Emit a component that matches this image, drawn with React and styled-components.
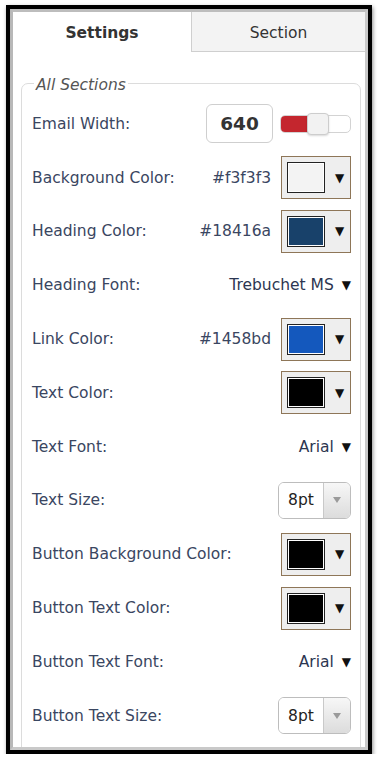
import React from "react";
import styled, { createGlobalStyle } from "styled-components";

const Global = createGlobalStyle`
  html, body { margin: 0; padding: 0; background: #fff; }
  body { font-family: "DejaVu Sans", sans-serif; }
  * { box-sizing: border-box; }
`;

const Frame = styled.div`
  margin: 5px 0 0 6px;
  width: 366px;
  height: 749px;
  border: 4px solid #000;
  box-shadow: 1px 2px 4px rgba(0, 0, 0, 0.45);
  overflow: hidden;
  background: #fff;
`;

const Bevel = styled.div`
  height: 100%;
  border: 3px solid #c9c9c9;
  border-left-color: #b8b8b8;
  border-top-color: #bdbdbd;
  overflow: hidden;
  display: flex;
  flex-direction: column;
`;

const Tabs = styled.div`
  display: flex;
  height: 40px;
  flex: none;
`;

const Tab = styled.div`
  flex: ${(p) => (p.$active ? "0 0 178px" : "1 1 auto")};
  display: flex;
  align-items: center;
  justify-content: center;
  font-size: 15.5px;
  font-weight: ${(p) => (p.$active ? 700 : 400)};
  color: #333;
  background: ${(p) => (p.$active ? "#fff" : "#f3f3f3")};
  border-left: ${(p) => (p.$active ? "none" : "1px solid #cfcfcf")};
  border-bottom: ${(p) => (p.$active ? "none" : "1px solid #cfcfcf")};
  padding-top: ${(p) => (p.$active ? 2 : 3)}px;
`;

const Fieldset = styled.fieldset`
  margin: 22px 4px 0 8px;
  padding: 0 9px 40px 10px;
  border: 1px solid #dcdcdc;
  border-radius: 7px;
  min-width: 0;
  flex: none;
`;

const Legend = styled.legend`
  padding: 0 2px;
  margin-left: 2px;
  font-style: italic;
  font-size: 15.5px;
  color: #555;
  line-height: 18px;
  position: relative;
  top: 2px;
`;

const Row = styled.div`
  display: flex;
  align-items: center;
  height: 53.8px;
  &:first-of-type { margin-top: 5px; }
`;

const Label = styled.div`
  flex: 1 1 auto;
  font-size: 15.5px;
  color: #3a4661;
  white-space: nowrap;
`;

const Controls = styled.div`
  display: flex;
  align-items: center;
  gap: ${(p) => p.$gap || 10}px;
`;

const NumberBox = styled.div`
  width: 67px;
  height: 39px;
  border: 1px solid #cfcfcf;
  border-radius: 6px;
  display: flex;
  align-items: center;
  justify-content: center;
  font-weight: 700;
  font-size: 18.5px;
  color: #333;
`;

const SliderTrack = styled.div`
  position: relative;
  width: 71px;
  height: 18px;
  border: 1px solid #d3d3d3;
  border-radius: 5px;
  background: #fff;
`;

const SliderFill = styled.div`
  height: 100%;
  border-radius: 4px 0 0 4px;
  background: #c4262e;
`;

const SliderKnob = styled.div`
  position: absolute;
  top: -3px;
  width: 22px;
  height: 22px;
  border: 1px solid #cdcdcd;
  border-radius: 4px;
  background: #f2f2f2;
  box-shadow: 0 1px 2px rgba(0, 0, 0, 0.15);
`;

const HexText = styled.div`
  font-size: 15.5px;
  color: #3a4661;
`;

const Picker = styled.div`
  width: 70px;
  height: 43px;
  border: 1px solid #8e7658;
  background: #eeeeee;
  display: flex;
  align-items: center;
  padding-left: 5px;
`;

const Swatch = styled.div`
  width: 38px;
  height: 31px;
  border: 1px solid #222;
  box-shadow: inset 0 0 0 1px #fff;
  background: ${(p) => p.$color};
`;

const Caret = styled.span`
  font-size: 12px;
  color: #111;
  margin-left: ${(p) => p.$ml || 0}px;
  line-height: 1;
`;

const FontValue = styled.div`
  display: flex;
  align-items: center;
  font-size: 15.5px;
  color: #2c3651;
`;

const SizeSelect = styled.div`
  width: 73px;
  height: 37px;
  border: 1px solid #bdbdbd;
  border-radius: 6px;
  display: flex;
  overflow: hidden;
`;

const SizeValue = styled.div`
  flex: 1;
  display: flex;
  align-items: center;
  justify-content: center;
  font-size: 15.5px;
  color: #222;
  background: #fff;
`;

const SizeArrow = styled.div`
  width: 27px;
  border-left: 1px solid #c9c9c9;
  background: linear-gradient(#f7f7f7, #dcdcdc);
  display: flex;
  align-items: center;
  justify-content: center;
  &::after {
    content: "";
    border-left: 4px solid transparent;
    border-right: 4px solid transparent;
    border-top: 6px solid #9a9a9a;
  }
`;

const ColorRow = ({ label, hex, color }) => (
  <Row>
    <Label>{label}</Label>
    <Controls>
      {hex && <HexText>{hex}</HexText>}
      <Picker>
        <Swatch $color={color} />
        <Caret $ml={10}>▼</Caret>
      </Picker>
    </Controls>
  </Row>
);

const FontRow = ({ label, value }) => (
  <Row>
    <Label>{label}</Label>
    <FontValue>
      {value}
      <Caret $ml={8}>▼</Caret>
    </FontValue>
  </Row>
);

const SizeRow = ({ label, value }) => (
  <Row>
    <Label>{label}</Label>
    <SizeSelect>
      <SizeValue>{value}</SizeValue>
      <SizeArrow />
    </SizeSelect>
  </Row>
);

export default function App() {
  return (
    <>
      <Global />
      <Frame>
        <Bevel>
          <Tabs>
            <Tab $active>Settings</Tab>
            <Tab>Section</Tab>
          </Tabs>
          <Fieldset>
            <Legend>All Sections</Legend>
            <Row>
              <Label>Email Width:</Label>
              <Controls $gap={7}>
                <NumberBox>640</NumberBox>
                <SliderTrack>
                  <SliderFill style={{ width: "40%" }} />
                  <SliderKnob style={{ left: "38%" }} />
                </SliderTrack>
              </Controls>
            </Row>
            <ColorRow label="Background Color:" hex="#f3f3f3" color="#f3f3f3" />
            <ColorRow label="Heading Color:" hex="#18416a" color="#18416a" />
            <FontRow label="Heading Font:" value="Trebuchet MS" />
            <ColorRow label="Link Color:" hex="#1458bd" color="#1458bd" />
            <ColorRow label="Text Color:" color="#000" />
            <FontRow label="Text Font:" value="Arial" />
            <SizeRow label="Text Size:" value="8pt" />
            <ColorRow label="Button Background Color:" color="#000" />
            <ColorRow label="Button Text Color:" color="#000" />
            <FontRow label="Button Text Font:" value="Arial" />
            <SizeRow label="Button Text Size:" value="8pt" />
          </Fieldset>
        </Bevel>
      </Frame>
    </>
  );
}
